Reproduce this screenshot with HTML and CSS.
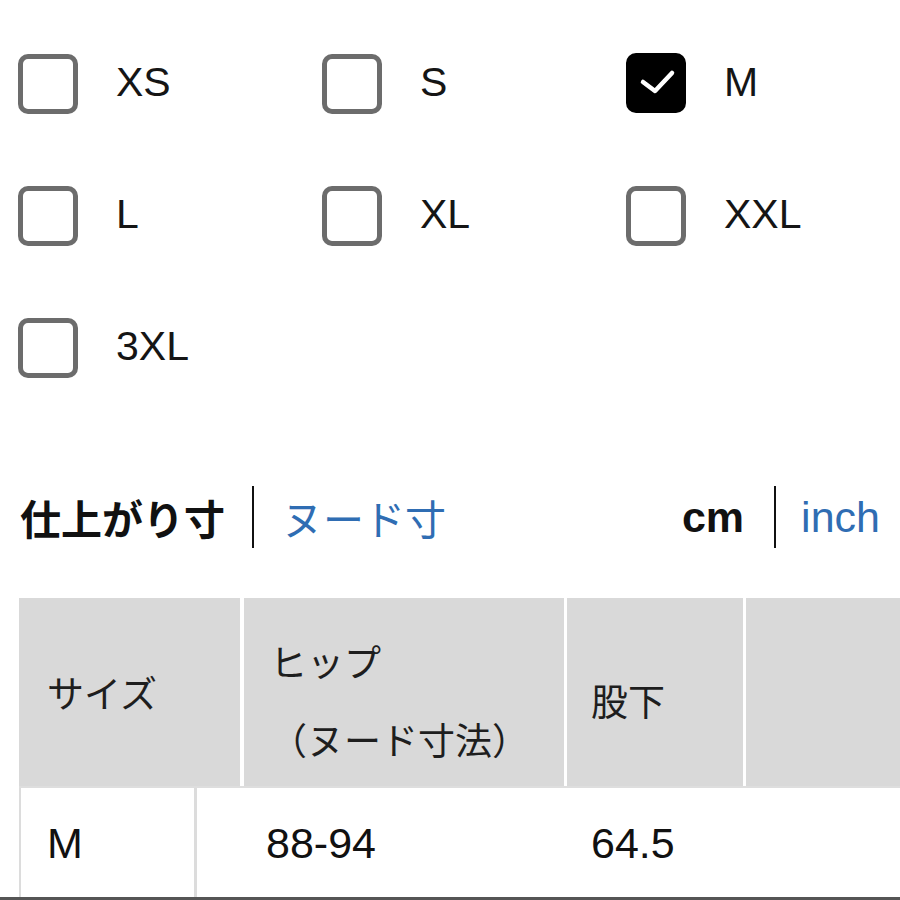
FILE: index.html
```html
<!DOCTYPE html>
<html lang="ja">
<head>
<meta charset="utf-8">
<link rel="stylesheet" href="styles.css">
</head>
<body>
<div class="page">
  <div class="sizes">
    <label class="opt"><span class="box"></span><span class="lbl">XS</span></label>
    <label class="opt"><span class="box"></span><span class="lbl">S</span></label>
    <label class="opt"><span class="box checked"><svg viewBox="0 0 60 60" width="60" height="60"><path d="M17 29 L29 38 L46 20" fill="none" stroke="#fff" stroke-width="4.5" stroke-linecap="round" stroke-linejoin="round"/></svg></span><span class="lbl">M</span></label>
    <label class="opt"><span class="box"></span><span class="lbl">L</span></label>
    <label class="opt"><span class="box"></span><span class="lbl">XL</span></label>
    <label class="opt"><span class="box"></span><span class="lbl">XXL</span></label>
    <label class="opt"><span class="box"></span><span class="lbl">3XL</span></label>
  </div>

  <div class="toggles">
    <div class="tgroup">
      <span class="active jp">仕上がり寸</span>
      <span class="sep"></span>
      <span class="link jp">ヌード寸</span>
    </div>
    <div class="tgroup">
      <span class="active en">cm</span>
      <span class="sep sep2"></span>
      <span class="link en">inch</span>
    </div>
  </div>

  <div class="table">
    <div class="thead">
      <div class="th th1">サイズ</div>
      <div class="th th2">ヒップ<br>（ヌード寸法）</div>
      <div class="th th3">股下</div>
      <div class="th th4"></div>
    </div>
  </div>
  <div class="trow">
    <div class="tcells">
      <div class="td td1">M</div>
      <div class="td td2">88-94</div>
      <div class="td td3">64.5</div>
    </div>
  </div>
</div>
</body>
</html>
```

FILE: styles.css
```css
html, body {
  margin: 0;
  padding: 0;
  background: #fff;
}
body {
  width: 900px;
  height: 900px;
  overflow: hidden;
  font-family: "Liberation Sans", "Noto Sans CJK JP", sans-serif;
  color: #111;
}
.page {
  height: 900px;
}
.sizes {
  display: grid;
  grid-template-columns: 304px 304px 292px;
  row-gap: 72px;
  padding: 54px 0 0 18px;
}
.opt {
  display: flex;
  align-items: center;
  height: 60px;
}
.box {
  box-sizing: border-box;
  width: 60px;
  height: 60px;
  border: 5px solid #6c6c6c;
  border-radius: 10px;
  flex: none;
  display: flex;
  align-items: center;
  justify-content: center;
}
.box.checked {
  background: #000;
  border-color: #000;
  margin-top: -2px;
}
.box.checked svg {
  display: block;
  margin: -5px;
  flex: none;
}
.lbl {
  margin-left: 38px;
  font-size: 41px;
  color: #151515;
  line-height: 1;
  margin-top: -3px;
}
.toggles {
  display: flex;
  justify-content: space-between;
  align-items: center;
  margin-top: 108px;
  height: 62px;
  padding: 0 20px 0 20px;
}
.tgroup {
  display: flex;
  align-items: center;
  height: 62px;
}
.sep {
  width: 2px;
  height: 62px;
  background: #111;
  margin: 0 28px 0 27px;
}
.sep2 {
  margin: 0 25px 0 30px;
}
.jp {
  font-family: "Noto Sans CJK JP", sans-serif;
  font-size: 41px;
  line-height: 1;
}
.en {
  font-size: 43px;
  line-height: 1;
}
.active {
  color: #111;
  font-weight: bold;
}
.link {
  color: #2f6db3;
}
.table {
  margin-top: 50px;
  margin-left: 19px;
}
.thead {
  display: grid;
  grid-template-columns: 221px 321px 176px 160px;
  column-gap: 3px;
  height: 188px;
}
.th {
  background: #d9d9d9;
  font-family: "Noto Sans CJK JP", sans-serif;
  font-size: 37px;
  color: #1e1e1e;
  display: flex;
  align-items: center;
  padding-top: 16px;
  box-sizing: border-box;
}
.th1 {
  padding-left: 28px;
  padding-top: 0;
}
.th2 {
  margin-left: 1px;
  padding-left: 26px;
  line-height: 78px;
}
.th3 {
  padding-left: 24px;
}
.trow {
  height: 114px;
  border-bottom: 3px solid #555;
  box-sizing: border-box;
}
.tcells {
  display: flex;
  height: 111px;
  margin-left: 19px;
  border-top: 2px solid #dedede;
  box-sizing: border-box;
}
.td {
  font-size: 43px;
  color: #111;
  display: flex;
  align-items: center;
  padding-top: 2px;
  box-sizing: border-box;
}
.td1 {
  width: 178px;
  border-left: 2px solid #dcdcdc;
  border-right: 3px solid #dcdcdc;
  padding-left: 26px;
}
.td2 {
  width: 394px;
  padding-left: 69px;
}
.td3 {
  padding-left: 0;
}
```
